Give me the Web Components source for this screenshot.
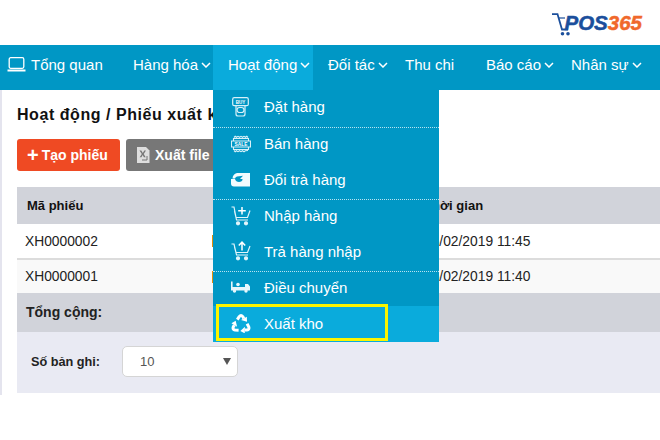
<!DOCTYPE html>
<html>
<head>
<meta charset="utf-8">
<style>
    html, body { margin: 0; padding: 0; background: #fff; }
    body { width: 660px; height: 440px; overflow: hidden; font-family: "Liberation Sans", Arial, sans-serif; }
</style>
</head>
<body>
<pos-page></pos-page>
<script>
(function () {
    const arrow3 = '<path d="M6.300 6.600L8.200 3.600Q10 1.400 11.800 3.600L12.800 5.400" fill="none" stroke="#fff" stroke-width="3"/><path d="M10 7L15.800 3.800 16 8.800z"/>';
    const ICONS = {
        laptop: '<svg width="19" height="17" viewBox="0 0 19 17" fill="none" stroke="#fff" stroke-width="1.3"><rect x="2.2" y="1.7" width="14.6" height="10.6" rx="1.5"/><path d="M.5 14.5h18" stroke-width="2"/></svg>',
        chevron: '<svg width="10" height="6" viewBox="0 0 10 6" fill="none" stroke="#fff" stroke-width="1.5"><path d="M1 1l4 4 4-4"/></svg>',
        buy: '<svg width="17" height="20" viewBox="0 0 17 20" fill="none" stroke="#d8f1f9" stroke-width="1.2"><rect x=".7" y=".7" width="15.600" height="8" rx="1.500"/><path d="M4 9v8a2 2 0 0 0 2 2h5a2 2 0 0 0 2-2V9"/><rect x="5" y="10.500" width="7" height="5" rx="2.500"/><text x="8.500" y="6.500" text-anchor="middle" font-family="Liberation Sans" font-weight="bold" font-size="4.500" fill="#fff" stroke="none">BUY</text></svg>',
        sale: '<svg width="20" height="19" viewBox="0 0 20 19" fill="none" stroke="#d8f1f9" stroke-width="1.100"><path d="M2.500 4.500h15v11h-15z"/><path d="M3 3.500l1.200-1.200 1.300 1 1.500-1 1.500 1 1.500-1 1.500 1 1.500-1 1.500 1 1.300-1L17 3.500M3 16.500l1.200 1.200 1.300-1 1.500 1 1.500-1 1.500 1 1.500-1 1.500 1 1.300-1L17 16.500"/><path d="M.5 7h19v6H.5z" fill="#0097c5"/><text x="10" y="11.700" text-anchor="middle" font-family="Liberation Sans" font-weight="bold" font-size="4.800" fill="#fff" stroke="none">SALE</text></svg>',
        swap: '<svg width="19" height="15" viewBox="0 0 19 15"><path fill="#f2fbfe" d="M6 1h13v13.500H3a3 3 0 0 1-3-3V7h4c.5 2 2 3 4 3s3.500-1 3.500-2.500V7H9l3-3.200L6 4.500a3 3 0 0 0-2 2H1.500A6 6 0 0 1 6 1z"/></svg>',
        cartIn: '<svg width="20" height="20" viewBox="0 0 20 20" fill="none" stroke="#e2f5fb" stroke-width="1.200"><path d="M.5 1H3l2.500 13H17M3.500 5l1.500 6.500h11.500L19 4.500"/><path d="M11 1v7.500M7.200 4.800h7.600" stroke="#fff" stroke-width="1.500"/><circle cx="7" cy="17.300" r="1.500" fill="#e2f5fb"/><circle cx="15" cy="17.300" r="1.500" fill="#e2f5fb"/></svg>',
        cartOut: '<svg width="20" height="20" viewBox="0 0 20 20" fill="none" stroke="#e2f5fb" stroke-width="1.200"><path d="M.5 3H3l2.500 11H17M3.500 6l1.500 5.500h11.500L19 5"/><path d="M11 9.500V1.500M7.800 4.500L11 1.200l3.200 3.300" stroke="#fff" stroke-width="1.500"/><circle cx="7" cy="17.300" r="1.500" fill="#e2f5fb"/><circle cx="15" cy="17.300" r="1.500" fill="#e2f5fb"/></svg>',
        truck: '<svg width="19" height="12" viewBox="0 0 19 12" fill="#e6f7fc"><path d="M0 .5h1.600v5.500H14V3h3l2 2.500V9.500H0z"/><circle cx="7" cy="3.500" r="1.800"/><circle cx="3.500" cy="10" r="1.700"/><circle cx="15" cy="10" r="1.700"/></svg>',
        recycle: `<svg width="20" height="20" viewBox="0 0 20 20" fill="#fff"><g>${arrow3}</g><g transform="rotate(120 10 11.500)">${arrow3}</g><g transform="rotate(240 10 11.500)">${arrow3}</g></svg>`,
        excel: '<svg width="13" height="16" viewBox="0 0 13 16"><path fill="#dedede" d="M0 0h9l3.500 3.500V16H0z"/><path fill="#777" d="M2.500 3.500h1.800l1.500 2.500 1.500-2.500h1.700L6.700 7l2 3.200H6.900L5.700 8.100 4.400 10.200H2.700l2.100-3.200z"/><path fill="none" stroke="#777" d="M5 13h5V9"/></svg>',
        cartLogo: '<svg width="18" height="23" viewBox="0 0 18 23" fill="none"><path d="M0 1.100h5.500L10 16.500h6" stroke="#1b4f9c" stroke-width="1.800"/><circle cx="10.500" cy="20.800" r="1.800" fill="#1b4f9c"/><circle cx="16" cy="20.800" r="1.800" fill="#1b4f9c"/><path d="M7 5h6" stroke="#1b4f9c" stroke-width="1.200"/></svg>'
    };

    class PosLogo extends HTMLElement {
        constructor() {
            super();
            this.attachShadow({ mode: "open" }).innerHTML = `
            <style>
                :host { display: flex; align-items: flex-start; font: italic bold 20.5px "Liberation Sans", sans-serif; line-height: 20px; -webkit-text-stroke: .5px currentColor; }
                svg { display: block; margin: 2px -6px 0 0; }
                .os { color: #1b4f9c; margin-top: 2px; }
                .num { color: #f0682b; margin-top: 2px; }
            </style>
            ${ICONS.cartLogo}<span class="os">POS</span><span class="num">365</span>`;
        }
    }

    class NavItem extends HTMLElement {
        constructor() {
            super();
            const icon = this.getAttribute("icon");
            const arrow = this.hasAttribute("arrow");
            this.attachShadow({ mode: "open" }).innerHTML = `
            <style>
                :host { display: flex; align-items: center; box-sizing: border-box; height: 45px; padding-bottom: 7px; color: #fff; font-size: 15px; position: relative; }
                :host([active]) { background: #0aabdc; }
                .icon { display: flex; margin-right: 5px; }
                .arrow { display: flex; margin-left: 3px; margin-top: 2px; }
            </style>
            ${icon ? `<span class="icon">${ICONS[icon]}</span>` : ""}
            <slot></slot>
            ${arrow ? `<span class="arrow">${ICONS.chevron}</span>` : ""}
            <slot name="menu"></slot>`;
        }
    }

    class DropMenu extends HTMLElement {
        constructor() {
            super();
            this.attachShadow({ mode: "open" }).innerHTML = `
            <style>
                :host { display: block; position: absolute; left: 0; top: 45px; width: 226px; background: #0097c5; z-index: 5; }
            </style>
            <slot></slot>`;
        }
    }

    class MenuItem extends HTMLElement {
        constructor() {
            super();
            this.attachShadow({ mode: "open" }).innerHTML = `
            <style>
                :host { display: flex; align-items: center; height: var(--h, 36px); padding-bottom: var(--pb, 5px); color: #fff; font-size: 15px; box-sizing: border-box; position: relative; }
                :host([divider]) { border-bottom: 1px dotted #b9e3f0; }
                :host([active]) { background: #0aabdc; }
                .icon { width: 51px; display: flex; justify-content: center; padding-left: 4px; box-sizing: border-box; }
                .mark { display: none; position: absolute; left: 3px; top: -2px; width: 172px; height: 37px; box-sizing: border-box; border: 3px solid #fbf500; }
                :host([active]) .mark { display: block; }
            </style>
            <span class="icon">${ICONS[this.getAttribute("icon")]}</span>
            <slot></slot>
            <span class="mark"></span>`;
        }
    }

    class PosButton extends HTMLElement {
        constructor() {
            super();
            const icon = this.getAttribute("icon");
            this.attachShadow({ mode: "open" }).innerHTML = `
            <style>
                :host { display: flex; align-items: center; box-sizing: border-box; height: 32px; padding: 0 10px; border-radius: 3px; color: #fff; font: bold 14px "Liberation Sans", sans-serif; background: var(--btn-bg, #777); }
                .plus { font-size: 20px; line-height: 20px; margin-right: 3px; }
                .icon { display: flex; margin-right: 5px; margin-left: 1px; }
            </style>
            ${icon === "plus" ? '<span class="plus">+</span>' : `<span class="icon">${ICONS.excel}</span>`}
            <slot></slot>`;
        }
    }

    class DataTable extends HTMLElement {
        constructor() {
            super();
            this.attachShadow({ mode: "open" }).innerHTML = `
            <style>
                :host { display: block; color: #222; font-size: 13.800px; }
                .row { display: grid; grid-template-columns: 195px 212px 1fr; align-items: center; box-sizing: border-box; }
                .row > :first-child { padding-left: 8px; }
                .head { height: 37px; background: #d1d3da; font-weight: bold; font-size: 13px; color: #111; }
                .head > :first-child { padding-left: 10px; }
                .one { height: 36px; background: #fff; border-bottom: 2px solid #dcdcdc; }
                .two { background: #f9f9f9; height: 33px; }
                .badge { display: block; width: 22px; height: 12px; background: #e08e0b; }
                .total { height: 39px; box-sizing: border-box; display: flex; align-items: center; padding: 0 0 2px 9px; background: #d1d3da; font-weight: bold; font-size: 14px; color: #222; }
            </style>
            <div class="row head"><span>Mã phiếu</span><span></span><span>Thời gian</span></div>
            <div class="row one"><span>XH0000002</span><span class="badge"></span><span>15/02/2019 11:45</span></div>
            <div class="row two"><span>XH0000001</span><span class="badge"></span><span>15/02/2019 11:40</span></div>
            <div class="total">Tổng cộng:</div>`;
        }
    }

    class PageSize extends HTMLElement {
        constructor() {
            super();
            this.attachShadow({ mode: "open" }).innerHTML = `
            <style>
                :host { display: flex; align-items: center; box-sizing: border-box; height: 61px; background: #e9eaf3; padding: 0 0 2px 14px; color: #222; font-size: 12.700px; font-weight: bold; }
                .label { width: 91px; }
                .select { display: flex; align-items: center; justify-content: space-between; box-sizing: border-box; width: 116px; height: 31px; padding: 0 6px 0 17px; background: #fff; border: 1px solid #d5d5d5; border-radius: 5px; font-size: 13px; font-weight: normal; color: #555; }
                .caret { width: 0; height: 0; border: 4px solid transparent; border-top: 7px solid #555; border-bottom: 0; }
            </style>
            <span class="label">Số bản ghi:</span>
            <div class="select"><span>10</span><span class="caret"></span></div>`;
        }
    }

    class PosPage extends HTMLElement {
        constructor() {
            super();
            this.attachShadow({ mode: "open" }).innerHTML = `
            <style>
                :host { display: block; width: 660px; height: 440px; overflow: hidden; font-family: "Liberation Sans", Arial, sans-serif; }
                header { display: flex; justify-content: flex-end; height: 45px; padding: 11px 18px 0 0; box-sizing: border-box; }
                nav { display: flex; height: 45px; background: #0097c5; }
                main { padding: 15px 0 0 17px; box-shadow: inset 2px 0 0 #e4e4ee; height: 305px; box-sizing: border-box; }
                h1 { margin: 0 0 14px; font-size: 16px; letter-spacing: .55px; line-height: 20px; color: #111; white-space: nowrap; }
                .tools { display: flex; gap: 6px; margin-bottom: 16px; }
                .i1 { width: 118px; padding-left: 7px; }
                .i2 { width: 95px; padding-left: 15px; }
                .i3 { width: 100px; padding-left: 15px; }
                .i4 { width: 77px; padding-left: 15px; }
                .i5 { width: 81px; padding-left: 15px; }
                .i6 { width: 85px; padding-left: 15px; }
                .i7 { width: 104px; padding-left: 15px; }
                .orange { --btn-bg: #ef4a23; width: 103px; }
                .grey { width: 110px; }
                .r1 { --h: 38px; --pb: 4px; }
                .r6 { --h: 34px; --pb: 4px; }
                .r7 { --pb: 2px; }
            </style>
            <header><pos-logo></pos-logo></header>
            <nav>
                <nav-item class="i1" icon="laptop">Tổng quan</nav-item>
                <nav-item class="i2" arrow>Hàng hóa</nav-item>
                <nav-item class="i3" arrow active>Hoạt động
                    <drop-menu slot="menu">
                        <menu-item class="r1" icon="buy" divider>Đặt hàng</menu-item>
                        <menu-item icon="sale">Bán hàng</menu-item>
                        <menu-item icon="swap" divider>Đổi trà hàng</menu-item>
                        <menu-item icon="cartIn">Nhập hàng</menu-item>
                        <menu-item icon="cartOut" divider>Trả hàng nhập</menu-item>
                        <menu-item class="r6" icon="truck">Điều chuyển</menu-item>
                        <menu-item class="r7" icon="recycle" active>Xuất kho</menu-item>
                    </drop-menu>
                </nav-item>
                <nav-item class="i4" arrow>Đối tác</nav-item>
                <nav-item class="i5">Thu chi</nav-item>
                <nav-item class="i6" arrow>Báo cáo</nav-item>
                <nav-item class="i7" arrow>Nhân sự</nav-item>
            </nav>
            <main>
                <h1>Hoạt động / Phiếu xuất kho</h1>
                <div class="tools">
                    <pos-button class="orange" icon="plus">Tạo phiếu</pos-button>
                    <pos-button class="grey" icon="excel">Xuất file</pos-button>
                </div>
                <data-table></data-table>
                <page-size></page-size>
            </main>`;
        }
    }

    customElements.define("pos-logo", PosLogo);
    customElements.define("nav-item", NavItem);
    customElements.define("drop-menu", DropMenu);
    customElements.define("menu-item", MenuItem);
    customElements.define("pos-button", PosButton);
    customElements.define("data-table", DataTable);
    customElements.define("page-size", PageSize);
    customElements.define("pos-page", PosPage);
})();
</script>
</body>
</html>
